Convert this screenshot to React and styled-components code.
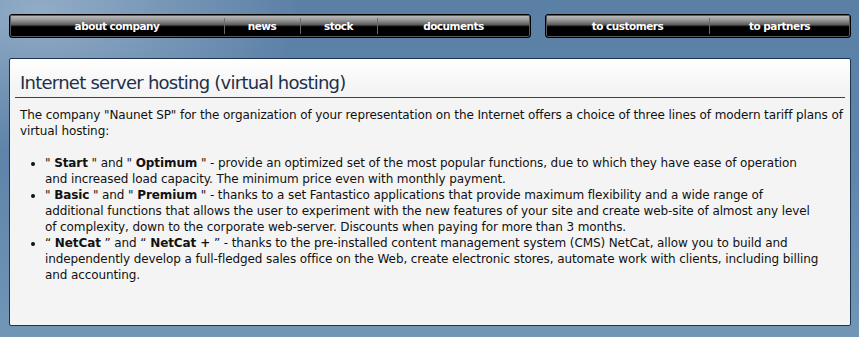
import React from 'react';
import styled, { createGlobalStyle } from 'styled-components';

const GlobalStyle = createGlobalStyle`
  html, body {
    margin: 0;
    padding: 0;
  }
  body {
    width: 859px;
    height: 337px;
    overflow: hidden;
    font-family: 'DejaVu Sans', Verdana, sans-serif;
    background:
      radial-gradient(ellipse 260px 140px at 40px 10px, rgba(200, 215, 230, 0.5), rgba(200, 215, 230, 0) 100%),
      linear-gradient(180deg, #5b80a6 0%, #5f85aa 50%, #7196b6 100%);
  }
`;

const Page = styled.div`
  padding: 14px 8px 0 9px;
`;

const NavRow = styled.div`
  display: flex;
  gap: 14px;
`;

const NavBar = styled.nav`
  width: ${p => p.width}px;
  height: 24px;
  box-sizing: border-box;
  display: grid;
  grid-template-columns: ${p => p.cols};
  border: 1px solid #000;
  border-radius: 3px;
  box-shadow: inset 0 0 0 1px #5a5a5a;
  background: linear-gradient(
    180deg,
    #c4c4c4 0%,
    #9a9a9a 22%,
    #5a5a5a 45%,
    #1a1a1a 50%,
    #000 54%,
    #000 100%
  );
`;

const NavItem = styled.a`
  display: flex;
  align-items: center;
  justify-content: center;
  color: #fff;
  font-size: 10.5px;
  font-weight: bold;
  letter-spacing: -0.5px;
  text-decoration: none;
  padding-bottom: 1px;
  position: relative;

  & + &::before {
    content: '';
    position: absolute;
    left: 0;
    top: 3px;
    bottom: 3px;
    width: 1px;
    background: #6c6c6c;
  }
`;

const Panel = styled.section`
  margin: 20px 1px 0 0;
  width: 842px;
  height: 268px;
  box-sizing: border-box;
  border: 1px solid #1e3350;
  border-radius: 2px;
  background: linear-gradient(180deg, #ffffff 0px, #f4f4f4 30px, #f4f4f4 100%);
  padding: 12px 5px 0 5px;
  color: #111;
  font-size: 12px;
  line-height: 16px;
  letter-spacing: -0.1px;
`;

const Title = styled.h1`
  margin: 0;
  padding: 0 0 2px 5px;
  font-size: 18px;
  font-weight: normal;
  letter-spacing: -0.75px;
  line-height: 24px;
  color: #1c3048;
  border-bottom: 1px solid #2a4568;
`;

const Intro = styled.p`
  margin: 9px 0 16px;
  padding-left: 5px;
`;

const List = styled.ul`
  margin: 0;
  padding: 0 25px 0 30px;
`;

const Item = styled.li`
  b {
    font-weight: bold;
  }
`;

export default function App() {
  return (
    <Page>
      <GlobalStyle />
      <NavRow>
        <NavBar width={522} cols="214px 76px 77px 1fr">
          <NavItem>about company</NavItem>
          <NavItem>news</NavItem>
          <NavItem>stock</NavItem>
          <NavItem>documents</NavItem>
        </NavBar>
        <NavBar width={306} cols="163px 1fr">
          <NavItem>to customers</NavItem>
          <NavItem>to partners</NavItem>
        </NavBar>
      </NavRow>

      <Panel>
        <Title>Internet server hosting (virtual hosting)</Title>
        <Intro>
          The company "Naunet SP" for the organization of your representation on the Internet
          offers a choice of three lines of modern tariff plans of virtual hosting:
        </Intro>
        <List>
          <Item>
            " <b>Start</b> " and " <b>Optimum</b> " - provide an optimized set of the most popular
            functions, due to which they have ease of operation and increased load capacity. The
            minimum price even with monthly payment.
          </Item>
          <Item>
            " <b>Basic</b> " and " <b>Premium</b> " - thanks to a set Fantastico applications that
            provide maximum flexibility and a wide range of additional functions that allows the
            user to experiment with the new features of your site and create web-site of almost any
            level of complexity, down to the corporate web-server. Discounts when paying for more
            than 3 months.
          </Item>
          <Item>
            “ <b>NetCat</b> ” and “ <b>NetCat +</b> ” - thanks to the pre-installed content
            management system (CMS) NetCat, allow you to build and independently develop a
            full-fledged sales office on the Web, create electronic stores, automate work with
            clients, including billing and accounting.
          </Item>
        </List>
      </Panel>
    </Page>
  );
}
